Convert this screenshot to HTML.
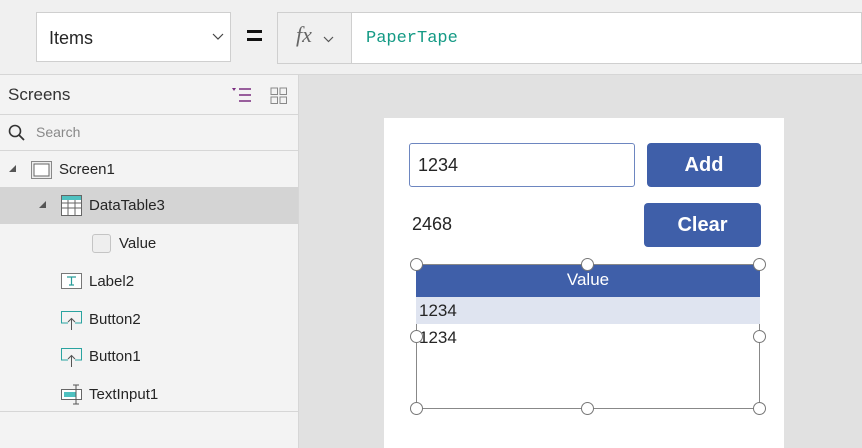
<!DOCTYPE html>
<html><head><style>
*{margin:0;padding:0;box-sizing:border-box}
body{width:862px;height:448px;overflow:hidden;background:#e1e1e1;font-family:"Segoe UI","Liberation Sans",sans-serif;position:relative;color:#252525}
.a{position:absolute}
.top{left:0;top:0;width:862px;height:75px;background:#f0f0f0;border-bottom:1px solid #d6d6d6}
.left{left:0;top:75px;width:299px;height:373px;background:#f3f3f3;border-right:1px solid #d6d6d6}
.row{position:absolute;left:0;width:298px;height:37px;font-size:15px;line-height:37px}
.h{position:absolute;width:13px;height:13px;border:1.3px solid #777;border-radius:50%;background:#fff}
.btn{background:#3f5fa9;color:#fff;border-radius:4px;font-size:20px;font-weight:bold;text-align:center}
</style></head><body>
<div class="a top"></div>
<div class="a" style="left:36px;top:12px;width:195px;height:50px;background:#fff;border:1px solid #cfcfcf;font-size:18px;line-height:50px;padding-left:12px">Items</div>
<svg class="a" style="left:212px;top:33px" width="12" height="8"><path d="M1 1 L6 6 L11 1" stroke="#444" fill="none" stroke-width="1.2"/></svg>
<div class="a" style="left:247px;top:30px;width:15px;height:3px;background:#111"></div>
<div class="a" style="left:247px;top:38px;width:15px;height:3px;background:#111"></div>
<div class="a" style="left:277px;top:12px;width:585px;height:52px;background:#fff;border:1px solid #cfcfcf"></div>
<div class="a" style="left:278px;top:13px;width:74px;height:50px;background:#f0f0f0;border-right:1px solid #cfcfcf"></div>
<div class="a" style="left:296px;top:22px;font-family:'Liberation Serif',serif;font-style:italic;font-size:22px;color:#666">fx</div>
<svg class="a" style="left:323px;top:36px" width="11" height="7"><path d="M1 1 L5.5 5.5 L10 1" stroke="#555" fill="none" stroke-width="1.2"/></svg>
<div class="a" style="left:366px;top:29px;font-family:'Liberation Mono',monospace;font-size:17px;color:#149a85">PaperTape</div>

<div class="a left"></div>
<div class="a" style="left:8px;top:85px;font-size:17px;color:#333">Screens</div>
<svg class="a" style="left:231px;top:87px" width="22" height="17"><path d="M1 1h4l-2 3z" fill="#7a2c7f"/><path d="M8 2h12M8 8h12M8 14h12" stroke="#7a2c7f" stroke-width="1.5"/></svg>
<svg class="a" style="left:270px;top:87px" width="18" height="18"><g fill="none" stroke="#888"><rect x="1" y="1" width="6.5" height="6.5"/><rect x="10" y="1" width="6.5" height="6.5"/><rect x="1" y="10" width="6.5" height="6.5"/><rect x="10" y="10" width="6.5" height="6.5"/></g></svg>
<div class="a" style="left:0;top:114px;width:298px;height:1px;background:#d6d6d6"></div>
<svg class="a" style="left:8px;top:124px" width="17" height="18"><circle cx="7" cy="7" r="5.5" stroke="#333" stroke-width="1.6" fill="none"/><path d="M11 11l5 5" stroke="#333" stroke-width="1.8"/></svg>
<div class="a" style="left:36px;top:124px;font-size:14px;color:#888">Search</div>
<div class="a" style="left:0;top:150px;width:298px;height:1px;background:#d6d6d6"></div>

<div class="row" style="top:151px"><svg class="a" style="left:9px;top:14px" width="8" height="8"><path d="M7 0V7H0z" fill="#555"/></svg><svg class="a" style="left:31px;top:10px" width="21" height="18"><rect x="0.5" y="0.5" width="20" height="17" fill="#eee" stroke="#888"/><rect x="3" y="3" width="15" height="12" fill="#fff" stroke="#666"/></svg><span class="a" style="left:59px">Screen1</span></div>
<div class="row" style="top:187px;background:#d4d4d4"><svg class="a" style="left:39px;top:14px" width="8" height="8"><path d="M7 0V7H0z" fill="#555"/></svg><svg class="a" style="left:61px;top:8px" width="21" height="21"><rect x="0.5" y="0.5" width="20" height="20" fill="#fff" stroke="#666"/><rect x="1" y="1" width="19" height="4" fill="#4fc1c0"/><path d="M0 8h21M0 13h21M7 5v16M14 5v16" stroke="#666"/></svg><span class="a" style="left:89px">DataTable3</span></div>
<div class="row" style="top:225px"><div class="a" style="left:92px;top:9px;width:19px;height:19px;border:1px solid #c4c4c4;border-radius:3px;background:#eee"></div><span class="a" style="left:119px">Value</span></div>
<div class="row" style="top:263px"><svg class="a" style="left:61px;top:10px" width="21" height="16"><rect x="0.5" y="0.5" width="20" height="15" fill="#fff" stroke="#777"/><path d="M6 4h9M10.5 4v8M8 12h5" stroke="#2a9d9a" stroke-width="1.2"/></svg><span class="a" style="left:89px">Label2</span></div>
<div class="row" style="top:301px"><svg class="a" style="left:61px;top:10px" width="21" height="20"><path d="M7 12H0.5V0.5h20V12H14" stroke="#2aa3a0" fill="none"/><path d="M10.5 19V8M7 11l3.5-3.5L14 11" stroke="#555" fill="none"/></svg><span class="a" style="left:89px">Button2</span></div>
<div class="row" style="top:338px"><svg class="a" style="left:61px;top:10px" width="21" height="20"><path d="M7 12H0.5V0.5h20V12H14" stroke="#2aa3a0" fill="none"/><path d="M10.5 19V8M7 11l3.5-3.5L14 11" stroke="#555" fill="none"/></svg><span class="a" style="left:89px">Button1</span></div>
<div class="row" style="top:376px"><svg class="a" style="left:61px;top:8px" width="22" height="21"><rect x="0.5" y="5.5" width="20" height="10" fill="#fff" stroke="#666"/><rect x="3" y="8" width="12" height="5" fill="#4fc1c0"/><path d="M15 1v19M12 1h6M12 20h6" stroke="#555"/></svg><span class="a" style="left:89px">TextInput1</span></div>
<div class="a" style="left:0;top:411px;width:298px;height:1px;background:#d6d6d6"></div>

<div class="a" style="left:384px;top:118px;width:400px;height:330px;background:#fff"></div>
<div class="a" style="left:409px;top:143px;width:226px;height:44px;border:1px solid #6d86c0;border-radius:3px;font-size:18px;line-height:42px;padding-left:8px">1234</div>
<div class="a btn" style="left:647px;top:143px;width:114px;height:44px;line-height:44px">Add</div>
<div class="a" style="left:412px;top:214px;font-size:18px">2468</div>
<div class="a btn" style="left:644px;top:203px;width:117px;height:44px;line-height:44px">Clear</div>
<div class="a" style="left:416px;top:264px;width:344px;height:145px;border:1px solid #888"></div>
<div class="a" style="left:416px;top:265px;width:344px;height:32px;background:#3f5fa9;color:#fff;font-size:17px;text-align:center;line-height:30px">Value</div>
<div class="a" style="left:416px;top:297px;width:344px;height:27px;background:#dfe4f0;font-size:17px;line-height:27px;padding-left:3px">1234</div>
<div class="a" style="left:416px;top:324px;font-size:17px;line-height:27px;padding-left:3px">1234</div>
<div class="h" style="left:410px;top:258px"></div><div class="h" style="left:581px;top:258px"></div><div class="h" style="left:753px;top:258px"></div>
<div class="h" style="left:410px;top:330px"></div><div class="h" style="left:753px;top:330px"></div>
<div class="h" style="left:410px;top:402px"></div><div class="h" style="left:581px;top:402px"></div><div class="h" style="left:753px;top:402px"></div>
</body></html>
